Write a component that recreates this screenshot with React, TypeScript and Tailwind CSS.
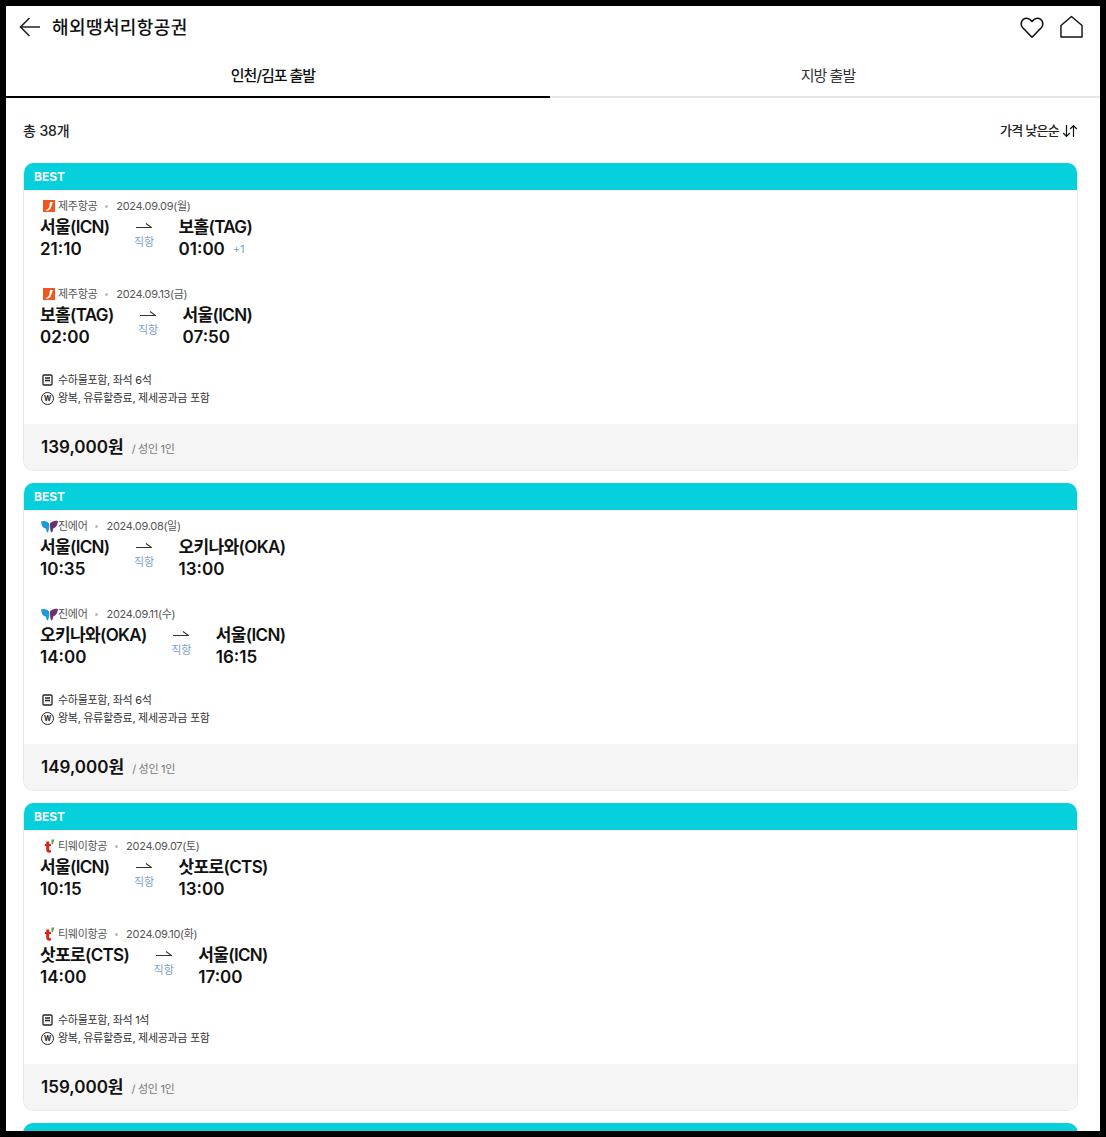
import React from "react";

const font = { fontFamily: '"Inter","Noto Sans CJK KR",sans-serif' };

function ArrowLeft() {
  return (
    <svg width="24" height="22" viewBox="0 0 24 22" fill="none" stroke="#222" strokeWidth="1.6">
      <path d="M22 11H2.500M11.500 2L2.500 11l9 9" />
    </svg>
  );
}
function Heart() {
  return (
    <svg width="24" height="23" viewBox="0 0 26 24" fill="none" stroke="#111" strokeWidth="1.7" strokeLinejoin="round">
      <path d="M13 22.500 3 12.300C.4 9.500.8 5.300 3.600 3.200 6.500 1 10.600 1.800 13 5.500 15.400 1.800 19.500 1 22.400 3.200c2.800 2.100 3.200 6.300.6 9.100L13 22.500Z" />
    </svg>
  );
}
function Home() {
  return (
    <svg width="23" height="24" viewBox="0 0 24 24" fill="none" stroke="#111" strokeWidth="1.5" strokeLinejoin="round">
      <path d="M1 22.500V10.500L12 1l11 9.500v12H1Z" />
    </svg>
  );
}
function SortIcon() {
  return (
    <svg width="16" height="14" viewBox="0 0 16 14" fill="none" stroke="#111" strokeWidth="1.2">
      <path d="M4.500 1v11.500M1.200 9l3.300 3.500L7.800 9M11.500 13V1.500M8.200 5l3.300-3.500L14.800 5" />
    </svg>
  );
}
function HalfArrow() {
  return (
    <svg width="16" height="7" viewBox="0 0 16 7" fill="none" stroke="#333" strokeWidth="1.1">
      <path d="M0 5.500h15.500L10 1.500" />
    </svg>
  );
}
function Note() {
  return (
    <svg width="11" height="12" viewBox="0 0 11 12" fill="none" stroke="#222" strokeWidth="1.300">
      <rect x="1" y="1" width="9" height="10" rx="1" />
      <path d="M3 4h5M3 6.500h5" />
    </svg>
  );
}
function Won() {
  return (
    <span className="flex h-[13px] w-[13px] items-center justify-center rounded-full border-[1.5px] border-[#222] text-[7px] font-bold leading-none text-[#222]">
      W
    </span>
  );
}
function JejuLogo() {
  return (
    <svg width="12" height="12" viewBox="0 0 12 12">
      <rect width="12" height="12" fill="#f0561f" />
      <path d="M7 2h3L7.500 8.500C7 10 5 11 2.500 10.500L4.500 9C5.500 8.800 5.800 8 6 7.500Z" fill="#fff" />
    </svg>
  );
}
function JinLogo() {
  return (
    <svg width="17" height="13" viewBox="0 0 17 13">
      <path d="M0 1.500C2 .5 6 .5 8.200 3.500 8.400 6 8 10.500 7 12.500 5.500 12.500 5 9.500 5 8.500 2.500 8.500.5 6 0 1.500Z" fill="#1c9ad6" />
      <path d="M17 1C14.500.2 11 1 9 3.500c-.2 3 .2 7 1.200 9 1.500-.2 2-3 2-4.200C14.500 8 16.500 5.500 17 1Z" fill="#6f2f6d" />
    </svg>
  );
}
function TwayLogo() {
  return (
    <svg width="12" height="14" viewBox="0 0 12 14">
      <path d="M3.200 2.500h3V5H8v2H6.200v3c0 1 .6 1.300 1.800 1.200v2.300C5 14 3.200 13 3.200 10.700V7H1.800V5h1.400Z" fill="#d8261c" />
      <path d="M8.500.5h2.700L10 5H8.700Z" fill="#5a9a2e" />
    </svg>
  );
}

const logos = { jeju: <JejuLogo />, jin: <JinLogo />, tway: <TwayLogo /> };

type Leg = { date: string; from: string; to: string; dep: string; arr: string; plus?: boolean };
type Offer = { airline: string; logo: "jeju" | "jin" | "tway"; legs: Leg[]; seats: string; price: string };

const offers: Offer[] = [
  {
    airline: "제주항공",
    logo: "jeju",
    legs: [
      { date: "2024.09.09(월)", from: "서울(ICN)", to: "보홀(TAG)", dep: "21:10", arr: "01:00", plus: true },
      { date: "2024.09.13(금)", from: "보홀(TAG)", to: "서울(ICN)", dep: "02:00", arr: "07:50" },
    ],
    seats: "수하물포함, 좌석 6석",
    price: "139,000원",
  },
  {
    airline: "진에어",
    logo: "jin",
    legs: [
      { date: "2024.09.08(일)", from: "서울(ICN)", to: "오키나와(OKA)", dep: "10:35", arr: "13:00" },
      { date: "2024.09.11(수)", from: "오키나와(OKA)", to: "서울(ICN)", dep: "14:00", arr: "16:15" },
    ],
    seats: "수하물포함, 좌석 6석",
    price: "149,000원",
  },
  {
    airline: "티웨이항공",
    logo: "tway",
    legs: [
      { date: "2024.09.07(토)", from: "서울(ICN)", to: "삿포로(CTS)", dep: "10:15", arr: "13:00" },
      { date: "2024.09.10(화)", from: "삿포로(CTS)", to: "서울(ICN)", dep: "14:00", arr: "17:00" },
    ],
    seats: "수하물포함, 좌석 1석",
    price: "159,000원",
  },
];

function LegRow({ leg, airline, logo }: { leg: Leg; airline: string; logo: Offer["logo"] }) {
  return (
    <div className="h-[88px]">
      <div className="flex h-[18px] items-center text-[11px] tracking-[-0.3px] text-[#555]">
        <span className="flex w-[18px] justify-center">{logos[logo]}</span>
        <span>{airline}</span>
        <span className="mx-[8px] h-[3px] w-[3px] rounded-full bg-[#bbb]" />
        <span>{leg.date}</span>
      </div>
      <div className="mt-[1px] flex">
        <div>
          <div className="h-[22px] text-[17px] font-semibold leading-[22px] tracking-[-0.65px] text-[#111]">{leg.from}</div>
          <div className="h-[22px] text-[17px] font-semibold leading-[22px] text-[#111]">{leg.dep}</div>
        </div>
        <div className="ml-[24px] mr-[24px] flex w-[21px] flex-col items-center pt-[6px]">
          <HalfArrow />
          <span className="mt-[6px] text-[11px] leading-[14px] text-[#7b9fc7]">직항</span>
        </div>
        <div>
          <div className="h-[22px] text-[17px] font-semibold leading-[22px] tracking-[-0.65px] text-[#111]">{leg.to}</div>
          <div className="flex h-[22px] items-center text-[17px] font-semibold leading-[22px] text-[#111]">
            {leg.arr}
            {leg.plus && <span className="ml-[8px] text-[11px] font-normal text-[#7b9fc7]">+1</span>}
          </div>
        </div>
      </div>
    </div>
  );
}

function Card({ offer }: { offer: Offer }) {
  return (
    <div className="flex h-[308px] flex-col overflow-hidden rounded-[10px] border-x border-b border-[#e8e8e8]">
      <div className="-mx-px flex h-[27px] shrink-0 items-center bg-[#06d0db] px-[11px] text-[12px] font-bold text-white">BEST</div>
      <div className="flex-1 px-[16px] pt-[7px]">
        {offer.legs.map((leg) => (
          <LegRow key={leg.date} leg={leg} airline={offer.airline} logo={offer.logo} />
        ))}
        <div className="mt-[-2px] flex h-[18px] items-center gap-[5px] pl-[2px] text-[11px] tracking-[-0.3px] text-[#333]">
          <span className="flex w-[11px] justify-center"><Note /></span>
          <span>{offer.seats}</span>
        </div>
        <div className="flex h-[18px] items-center gap-[4px] pl-[1px] text-[11px] tracking-[-0.3px] text-[#333]">
          <Won />
          <span>왕복, 유류할증료, 제세공과금 포함</span>
        </div>
      </div>
      <div className="flex h-[46px] shrink-0 items-center bg-[#f5f5f5] px-[17px] pt-[1px]">
        <span className="text-[17px] font-semibold text-[#111]">{offer.price}</span>
        <span className="ml-[8px] mt-[3px] text-[11px] tracking-[-0.3px] text-[#777]">/ 성인 1인</span>
      </div>
    </div>
  );
}

export default function App() {
  return (
    <div style={font} className="h-[1137px] w-[1106px] overflow-hidden border-[6px] border-black bg-white">
      <header className="flex h-[42px] items-center justify-between pl-[12px] pr-[17px]">
        <div className="flex items-center gap-[10px]">
          <ArrowLeft />
          <h1 className="text-[18px] font-medium tracking-[0.4px] text-[#111]">해외땡처리항공권</h1>
        </div>
        <div className="flex items-center gap-[16px]">
          <Heart />
          <Home />
        </div>
      </header>
      <nav className="flex h-[50px] text-[15px] text-[#111]">
        <div className="flex w-[544px] items-center justify-center border-b-2 border-black pr-[10px] pt-[8px] font-medium tracking-[-1px]">인천/김포 출발</div>
        <div className="flex flex-1 items-center justify-center border-b-2 border-[#e6e6e6] pl-[6px] pt-[8px] tracking-[-1px] text-[#333]">지방 출발</div>
      </nav>
      <div className="flex h-[65px] items-center justify-between pl-[17px] pr-[22px] font-medium text-[#222]">
        <span className="text-[14px] tracking-[-0.1px]">총 38개</span>
        <span className="flex items-center gap-[3px] text-[13px] tracking-[-0.7px]">가격 낮은순 <SortIcon /></span>
      </div>
      <div className="flex flex-col gap-[12px] pl-[17px] pr-[22px]">
        {offers.map((o) => (
          <Card key={o.price} offer={o} />
        ))}
        <div className="h-[27px] rounded-t-[10px] bg-[#06d0db]" />
      </div>
    </div>
  );
}
